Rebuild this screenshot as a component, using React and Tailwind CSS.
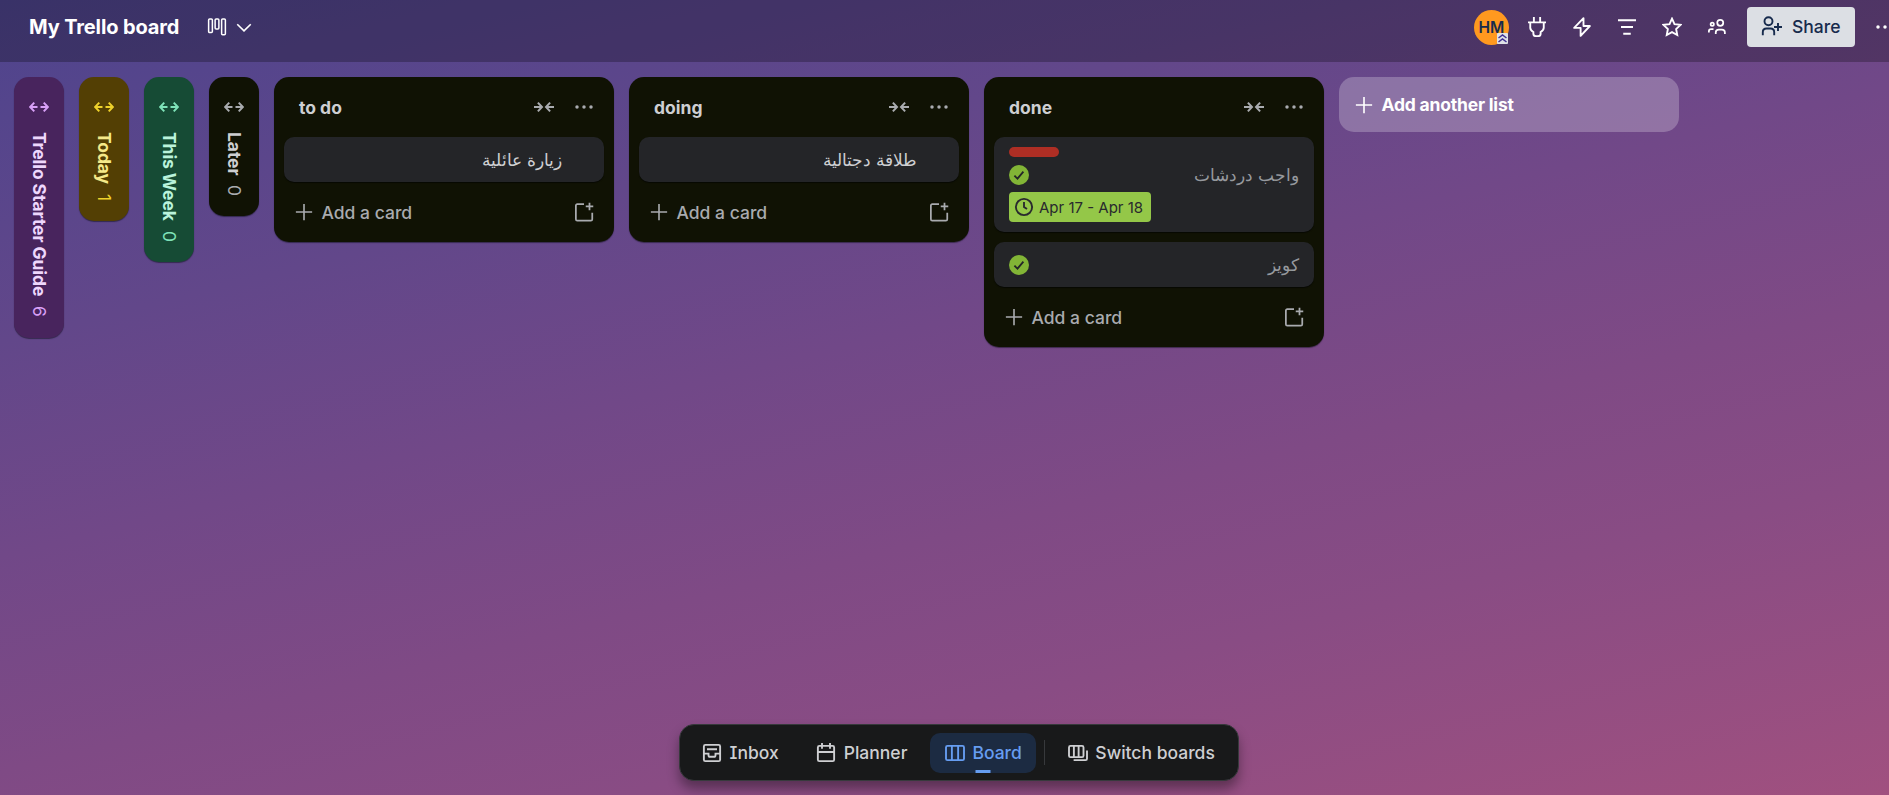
const sidebarLists = [
  { name: 'Trello Starter Guide', count: 6, box: 'h-[261px] bg-[#48245d]', text: 'text-[#eed7fc]', accent: 'text-[#d8a0f7]' },
  { name: 'Today', count: 1, box: 'h-[144px] bg-[#533f04]', text: 'text-[#f5e989]', accent: 'text-[#eed12b]' },
  { name: 'This Week', count: 0, box: 'h-[185px] bg-[#164b35]', text: 'text-[#baf3db]', accent: 'text-[#7ee2b8]' },
  { name: 'Later', count: 0, box: 'h-[139px] bg-[#101204]', text: 'text-[#cecfd2]', accent: 'text-[#a9abaf]' },
];

const lists = [
  { name: 'to do', cards: [{ title: 'زيارة عائلية' }] },
  { name: 'doing', cards: [{ title: 'طلاقة دجتالية' }] },
  {
    name: 'done',
    cards: [
      { title: 'واجب دردشات', done: true, label: true, due: 'Apr 17 - Apr 18' },
      { title: 'كويز', done: true },
    ],
  },
];

function Icon({ children, size = 20, width = 1.5, className = '' }) {
  return (
    <svg
      width={size}
      height={size}
      viewBox="0 0 16 16"
      fill="none"
      stroke="currentColor"
      strokeWidth={width}
      className={`shrink-0 ${className}`}
    >
      {children}
    </svg>
  );
}

const ExpandIcon = () => (
  <Icon width={1.6}>
    <path d="M6.8 8H1M4.2 4.5.9 8l3.3 3.5M9.2 8H15M11.8 4.5 15.1 8l-3.3 3.5" />
  </Icon>
);

const CollapseIcon = () => (
  <Icon width={1.6}>
    <path d="M0 8h6M3.1 4.5 6.4 8l-3.3 3.5M16 8h-6M12.9 4.5 9.6 8l3.3 3.5" />
  </Icon>
);

const DotsIcon = () => (
  <svg width="20" height="20" viewBox="0 0 20 20" fill="currentColor" className="shrink-0">
    <circle cx="3" cy="10" r="1.75" />
    <circle cx="10" cy="10" r="1.75" />
    <circle cx="17" cy="10" r="1.75" />
  </svg>
);

const PlusIcon = () => (
  <Icon width={1.3}>
    <path d="M8 1.5v13M1.5 8h13" />
  </Icon>
);

const TemplateIcon = () => (
  <Icon width={1.4}>
    <path d="M8 1.7H2.6a1.1 1.1 0 0 0-1.1 1.1v10.9a1.1 1.1 0 0 0 1.1 1.1h10.9a1.1 1.1 0 0 0 1.1-1.1V8.6M12.4.5v6M9.4 3.5h6" />
  </Icon>
);

const CheckIcon = () => (
  <svg width="20" height="20" viewBox="0 0 20 20" className="shrink-0">
    <circle cx="10" cy="10" r="10" fill="#82b536" />
    <path d="M5.4 10.6 8.5 13.7 14.4 6.7" fill="none" stroke="#242528" strokeWidth="1.8" />
  </svg>
);

function CollapsedList({ list }) {
  return (
    <div className={`flex w-[50px] flex-col items-center rounded-[15px] pt-5 shadow-[0_1px_1px_rgba(9,12,20,0.5)] ${list.box}`}>
      <span className={list.accent}>
        <ExpandIcon />
      </span>
      <div className="mt-[15px] flex items-center gap-[10px] text-[17.5px] leading-[25px] [writing-mode:vertical-rl]">
        <span className={`font-[650] tracking-[-0.08px] ${list.text}`}>{list.name}</span>
        <span className={list.accent}>{list.count}</span>
      </div>
    </div>
  );
}

function Card({ card }) {
  return (
    <div className="rounded-[10px] bg-[#242528] px-[15px] py-[10px] shadow-[0_1px_1px_rgba(1,4,4,0.6)]">
      {card.label && <div className="mb-[5px] h-[10px] w-[50px] rounded-full bg-[#ae2e24]" />}
      <div className="flex h-[25px] items-center justify-between">
        {card.done ? <CheckIcon /> : <span />}
        <span
          dir="rtl"
          className={`pt-[2px] text-[16.5px] leading-[25px] ${card.done ? 'text-[#96999e]' : 'pr-[27px] text-[#cecfd2]'}`}
        >
          {card.title}
        </span>
      </div>
      {card.due && (
        <div className="mt-[5px] flex h-[30px] w-[142px] items-center rounded-[4px] bg-[#94c748] pl-[5px] text-[15px] text-[#292a2e]">
          <Icon>
            <circle cx="8" cy="8" r="6.5" />
            <path d="M8 4v4l2.4 1.6" />
          </Icon>
          <span className="ml-[5px] pt-[2px] whitespace-nowrap">{card.due}</span>
        </div>
      )}
    </div>
  );
}

function List({ list }) {
  return (
    <div className="w-[340px] rounded-[15px] bg-[#101204] p-[10px] text-[#a9abaf] shadow-[0_1px_1px_rgba(9,12,20,0.5)]">
      <div className="flex h-[40px] items-center pr-[10px] pl-[15px]">
        <h2 className="flex-1 pt-[3px] text-[17.5px] font-[650] text-[#cecfd2]">{list.name}</h2>
        <CollapseIcon />
        <span className="ml-5">
          <DotsIcon />
        </span>
      </div>
      <div className="mt-[10px] flex flex-col gap-[10px]">
        {list.cards.map((card) => (
          <Card key={card.title} card={card} />
        ))}
      </div>
      <div className="mt-[10px] flex h-[40px] items-center pr-[10px] pl-[10px]">
        <PlusIcon />
        <span className="ml-[7.5px] flex-1 pt-[2px] text-[17.5px] font-medium">Add a card</span>
        <TemplateIcon />
      </div>
    </div>
  );
}

function Header() {
  return (
    <header className="flex h-[62px] shrink-0 items-start bg-black/26 pt-[7px] text-white">
      <h1 className="ml-[29px] w-[151px] text-[20px] leading-[40px] font-bold tracking-[-0.13px] whitespace-nowrap">My Trello board</h1>
      <div className="ml-[27px] flex h-[40px] items-center gap-[7px]">
        <Icon width={1.2}>
          <rect x="1.3" y="1.6" width="3" height="10.8" rx=".8" />
          <rect x="6.5" y="1.6" width="3" height="8" rx=".8" />
          <rect x="11.7" y="1.6" width="3" height="12.6" rx=".8" />
        </Icon>
        <Icon width={1.3}>
          <path d="m2.6 5.8 5.4 5.2 5.4-5.2" />
        </Icon>
      </div>
      <div className="flex-1" />
      <div className="flex h-[40px] w-[415px] items-center overflow-hidden">
        <div className="relative mt-px flex size-[35px] shrink-0 items-center justify-center rounded-full bg-[#ff991f] text-[15.5px] font-semibold text-[#172b4d]">
          HM
          <svg width="11" height="11" viewBox="0 0 11 11" className="absolute right-[1px] bottom-[1px]">
            <rect width="11" height="11" rx="1" fill="#dfe1e6" />
            <path d="m1.5 5 4-3 4 3M1.5 9l4-3 4 3" fill="none" stroke="#403294" strokeWidth="1.5" />
          </svg>
        </div>
        <div className="ml-[18px] flex items-center gap-[25px]">
          <Icon>
            <path d="M5.5 0v4M10.5 0v4M.8 4.3h14.4M2.6 4.3v4.3c0 1.4.8 2.4 2.5 3.4v1.4c0 1.2.8 1.9 2 1.9h1.8c1.2 0 2-.7 2-1.9V12c1.7-1 2.5-2 2.5-3.4V4.3" />
          </Icon>
          <Icon>
            <path d="M9.2.9 1.7 8.7h5.2v6.4l7.4-7.9H9.2z" strokeLinejoin="round" />
          </Icon>
          <Icon>
            <path d="M.8 2.6h14.4M3.2 8h9.6M5 13.4h6" />
          </Icon>
          <Icon>
            <path d="m8 1.3 2 4.4 4.8.6-3.5 3.3.9 4.8L8 12.1l-4.2 2.3.9-4.8L1.2 6.3 6 5.7z" />
          </Icon>
          <Icon width={1.4}>
            <circle cx="10.6" cy="4.6" r="2.4" />
            <circle cx="4.2" cy="5.8" r="1.3" />
            <path d="M7 13.6v-1.2c0-1.4 1-2.3 2.4-2.3h2.5c1.4 0 2.4.9 2.4 2.3v1.2M1.5 12.4v-.9c0-1.1.7-1.8 1.8-1.8h1.9" />
          </Icon>
        </div>
        <button className="ml-[20px] flex h-[40px] w-[108px] shrink-0 items-center rounded-[4px] bg-[#dcdfe4] pl-[14px] text-[#172b4d]">
          <svg width="22" height="20" viewBox="0 0 22 20" fill="none" stroke="currentColor" strokeWidth="1.9" className="mb-[3px] shrink-0">
            <circle cx="7.5" cy="5.2" r="4" />
            <path d="M1.8 19.2v-3c0-2.4 1.4-3.7 3.7-3.7h4c2.3 0 3.7 1.3 3.7 3.7v3M17 7v8M13 11h8" />
          </svg>
          <span className="ml-[9px] pt-px text-[17.5px] font-medium">Share</span>
        </button>
        <span className="ml-[20px]">
          <DotsIcon />
        </span>
      </div>
    </header>
  );
}

function NavItem({ label, active, children }) {
  return (
    <div className={`relative flex h-[40px] items-center gap-[7.5px] rounded-[10px] px-[14.5px] ${active ? 'bg-[#1c2b42] text-[#669df1]' : ''}`}>
      {children}
      <span className="pt-px whitespace-nowrap">{label}</span>
      {active && <span className="absolute bottom-0 left-1/2 h-[3px] w-[15px] -translate-x-1/2 bg-[#669df1]" />}
    </div>
  );
}

function BottomNav() {
  return (
    <nav className="flex h-[57px] w-[560px] items-center rounded-[15px] border border-[#37393c] bg-[#18191a] pl-[7.5px] text-[17.5px] font-medium text-[#cecfd2] shadow-[0_8px_12px_rgba(1,4,4,0.36)]">
      <div className="flex gap-[8.5px]">
        <NavItem label="Inbox">
          <Icon>
            <rect x="1.5" y="1.5" width="13" height="13" rx="1.2" />
            <path d="M4 5h8M1.5 8.5h3.7v1.2c0 .8.5 1.3 1.3 1.3h3c.8 0 1.3-.5 1.3-1.3V8.5h3.7" />
          </Icon>
        </NavItem>
        <NavItem label="Planner">
          <Icon>
            <rect x="1.5" y="2.3" width="13" height="12.2" rx="1.2" />
            <path d="M4.8 0v4.5M11.2 0v4.5M1.5 7.2h13" />
          </Icon>
        </NavItem>
        <NavItem label="Board" active>
          <Icon>
            <rect x=".8" y="2.3" width="14.4" height="11.4" rx="1.2" />
            <path d="M5.5 2.3v11.4M10.5 2.3v11.4" />
          </Icon>
        </NavItem>
      </div>
      <div className="mx-[8px] h-[25px] w-px bg-[#37393c]" />
      <NavItem label="Switch boards">
        <Icon>
          <rect x=".8" y="2.3" width="11.6" height="9" rx="1.2" />
          <path d="M4.7 2.3v9M8.5 2.3v9M15.2 6v6.5c0 .8-.4 1.2-1.2 1.2H4.5" />
        </Icon>
      </NavItem>
    </nav>
  );
}

export default function App() {
  return (
    <div className="flex h-[795px] w-[1889px] flex-col overflow-hidden bg-[linear-gradient(166deg,#4e448d_0%,#62478a_27%,#714888_44%,#7f4a85_61%,#894c84_75%,#a0507f_100%)] font-[Inter,'Noto_Sans',sans-serif] [font-feature-settings:'cv08']">
      <Header />
      <main className="flex flex-1 items-start gap-[15px] pt-[15px] pl-[14px]">
        {sidebarLists.map((list) => (
          <CollapsedList key={list.name} list={list} />
        ))}
        {lists.map((list) => (
          <List key={list.name} list={list} />
        ))}
        <button className="flex h-[55px] w-[340px] items-center rounded-[15px] bg-white/24 pl-[15px] text-[17.5px] font-[650] text-white">
          <PlusIcon />
          <span className="ml-[7.5px] pt-px tracking-[-0.2px]">Add another list</span>
        </button>
      </main>
      <div className="flex justify-center pb-[14px] pl-[29px]">
        <BottomNav />
      </div>
    </div>
  );
}
